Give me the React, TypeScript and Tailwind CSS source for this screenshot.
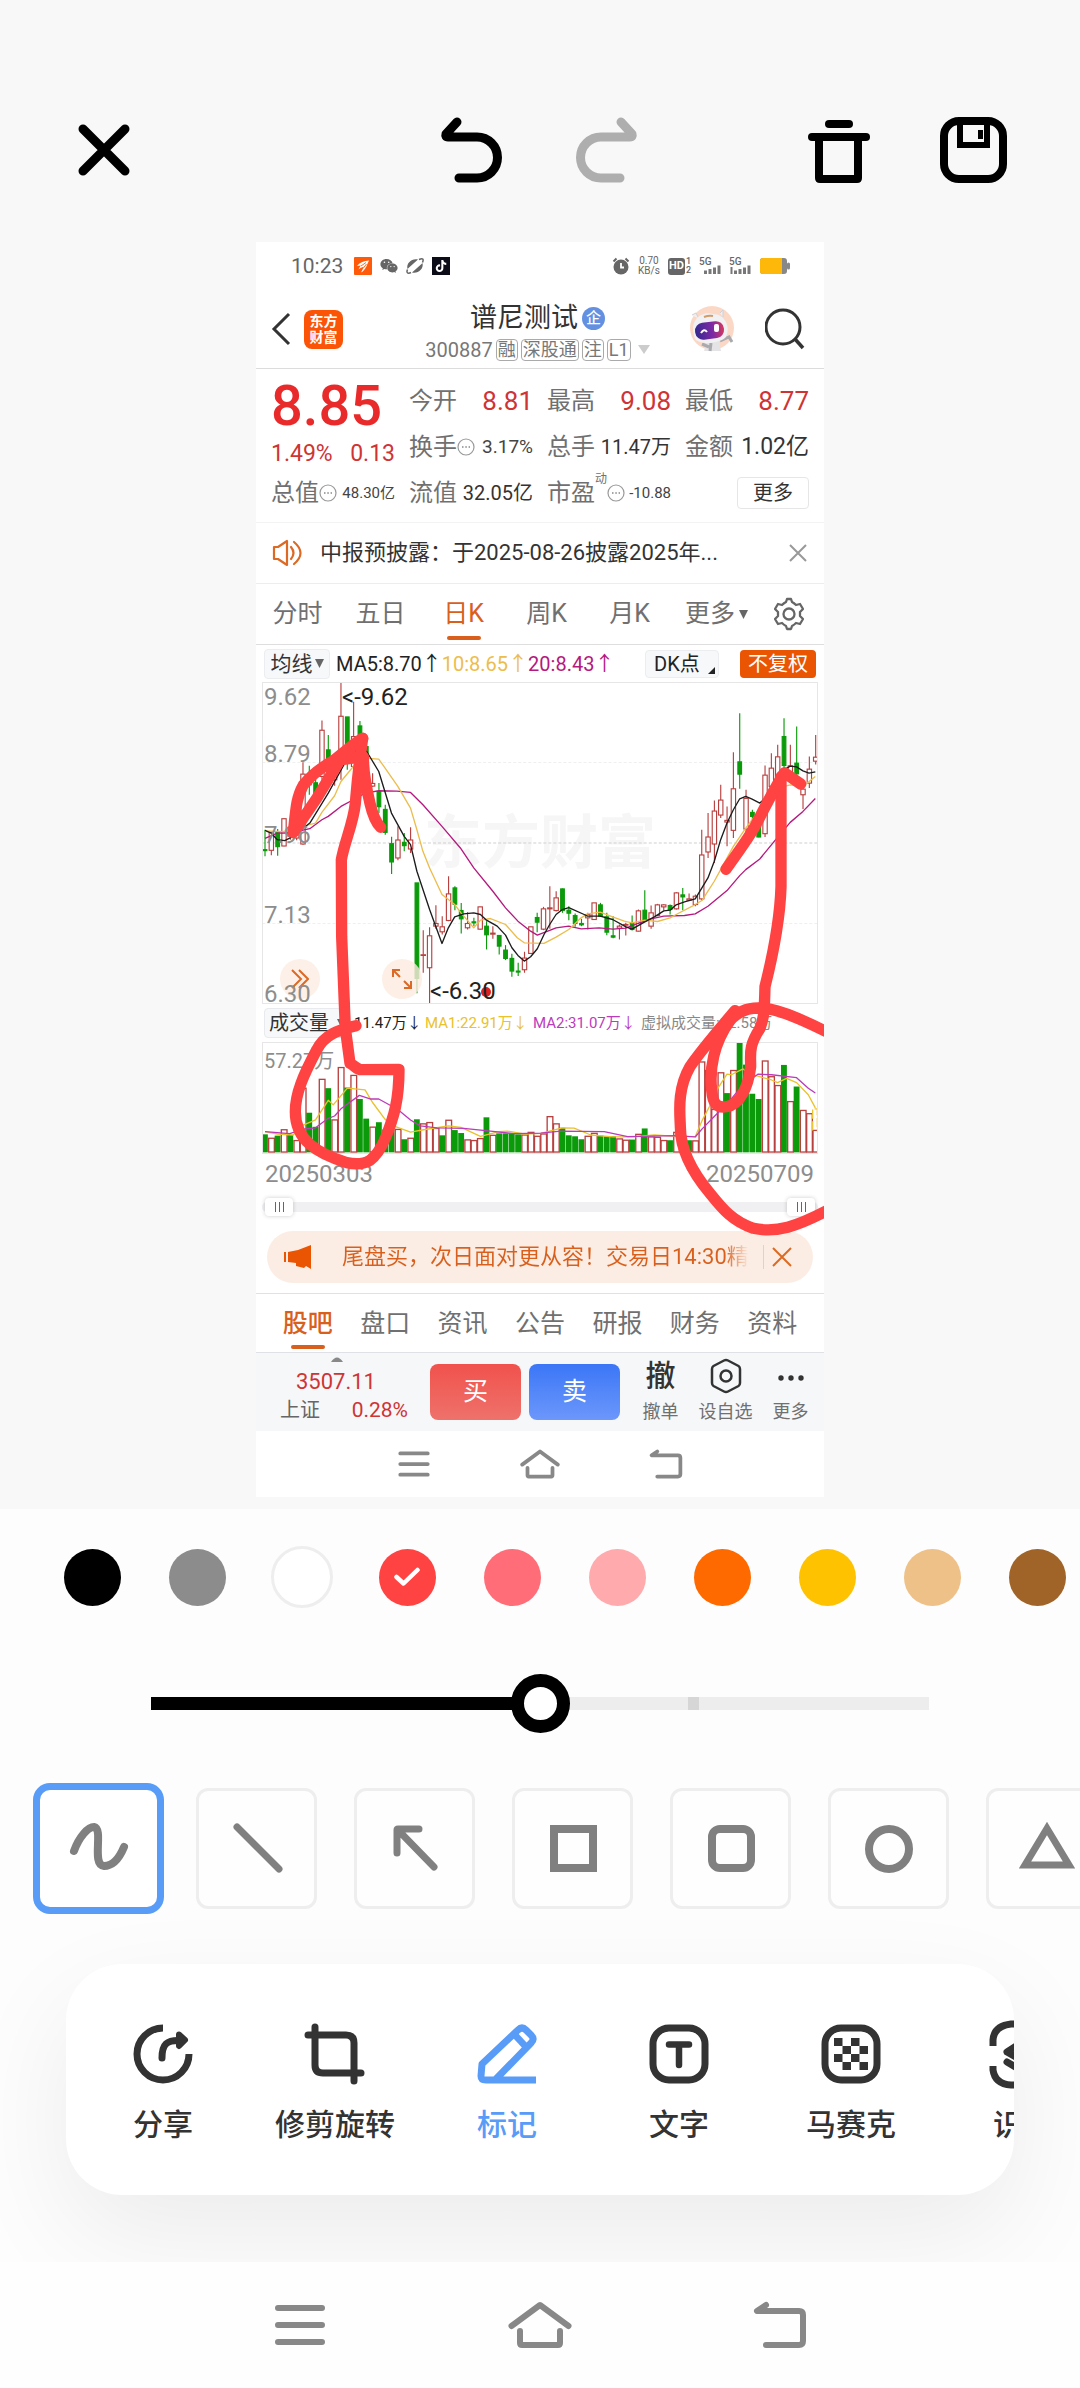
import React, { useState } from "react";
import { FaTiktok, FaWeixin } from "react-icons/fa6";

/* ---------- chart data ---------- */

// [rising, high, bodyTop, bodyBottom, low] in chart units
const CANDLES: [number, number, number, number, number][] = [
  [0, 480, 540, 543, 560], [1, 485, 488, 542, 557], [0, 478, 487, 531, 558], [1, 447, 447, 529, 530],
  [1, 470, 480, 500, 510], [1, 455, 470, 505, 512], [1, 277, 313, 523, 525], [0, 288, 315, 345, 375],
  [0, 320, 339, 380, 415], [1, 152, 181, 320, 330], [0, 195, 240, 300, 330], [1, 255, 270, 330, 348],
  [1, 37, 139, 270, 330], [0, 141, 141, 230, 300], [1, 95, 200, 290, 310], [0, 153, 168, 230, 260],
  [0, 215, 230, 300, 320], [1, 310, 341, 349, 352], [0, 340, 365, 411, 430], [0, 405, 419, 488, 495],
  [0, 501, 522, 577, 613], [1, 470, 511, 565, 572], [0, 490, 518, 528, 545], [1, 473, 511, 538, 550],
  [0, 640, 640, 927, 972], [1, 782, 856, 858, 910], [1, 773, 799, 895, 1002], [1, 707, 762, 770, 778],
  [1, 740, 772, 787, 795], [1, 620, 673, 753, 755], [0, 650, 655, 704, 722], [0, 700, 723, 748, 792],
  [1, 728, 762, 775, 780], [0, 745, 757, 760, 770], [1, 712, 712, 779, 780], [0, 755, 770, 796, 840],
  [1, 770, 791, 794, 808], [0, 797, 798, 830, 855], [0, 827, 842, 867, 872], [0, 853, 867, 905, 922],
  [0, 880, 905, 908, 920], [1, 847, 866, 901, 910], [1, 772, 772, 852, 853], [0, 730, 744, 758, 788],
  [1, 712, 718, 779, 782], [1, 650, 715, 718, 778], [1, 665, 685, 723, 726], [0, 657, 658, 723, 730],
  [0, 710, 722, 731, 752], [0, 732, 738, 762, 772], [0, 748, 762, 766, 770], [1, 730, 735, 745, 780],
  [1, 700, 700, 750, 751], [0, 700, 706, 740, 742], [0, 730, 742, 788, 797], [0, 740, 799, 803, 806],
  [1, 765, 770, 776, 810], [1, 760, 765, 767, 798], [0, 738, 762, 780, 783], [1, 720, 724, 785, 786],
  [0, 662, 722, 752, 756], [1, 708, 730, 770, 778], [1, 703, 706, 738, 740], [1, 704, 706, 712, 722],
  [0, 705, 708, 720, 735], [1, 668, 670, 718, 720], [0, 655, 676, 682, 722], [1, 672, 688, 692, 693],
  [1, 675, 680, 705, 710], [1, 480, 556, 688, 693], [1, 430, 502, 547, 565], [1, 392, 424, 523, 580],
  [1, 345, 391, 436, 445], [1, 410, 452, 457, 530], [1, 247, 357, 482, 505], [0, 130, 276, 313, 357],
  [1, 360, 386, 478, 500], [0, 420, 428, 440, 470], [0, 450, 470, 502, 503], [1, 287, 316, 492, 502],
  [1, 250, 295, 350, 380], [1, 225, 261, 320, 360], [0, 145, 200, 287, 300], [1, 225, 288, 310, 340],
  [0, 170, 280, 312, 330], [1, 330, 358, 375, 418], [1, 260, 298, 340, 355], [1, 195, 262, 274, 284],
];

// top edge of every volume bar; the base line is at 460
const VOLUMES = [
  408, 418, 412, 392, 410, 425, 265, 342, 385, 238, 267, 362, 202, 265, 226, 300, 360, 384, 371, 393, 395, 391,
  423, 418, 362, 374, 370, 388, 411, 363, 395, 404, 423, 425, 419, 356, 409, 405, 405, 405, 408, 408, 400, 412,
  405, 352, 374, 388, 411, 414, 423, 412, 403, 412, 414, 414, 420, 424, 424, 406, 390, 414, 415, 425, 426, 400,
  426, 426, 426, 185, 211, 330, 218, 282, 211, 128, 195, 284, 300, 182, 230, 257, 196, 306, 262, 333, 343, 394,
];
// days whose volume bar has another colour than their candle
const VOLUME_RED = [33, 36, 43];
const VOLUME_GREEN = [4, 28, 67, 73, 76];

const MA5 =
  "46,482 64,490 83,510 105,513 130,500 180,460 235,370 290,270 320,240 350,245 386,305 424,430 462,500 481,525 500,605 538,720 575,822 594,775 613,742 640,733 670,730 690,735 708,752 740,770 765,797 784,835 802,858 821,875 840,862 860,838 880,795 897,765 916,735 935,720 954,714 1000,735 1010,740 1048,740 1085,750 1125,772 1143,779 1180,758 1210,742 1238,724 1257,722 1275,706 1300,697 1332,688 1352,655 1370,625 1389,575 1408,510 1427,460 1446,420 1465,387 1483,380 1502,388 1525,400 1560,370 1597,300 1616,289 1635,291 1654,303 1672,310 1691,306";
const MA10 =
  "46,484 100,486 150,472 197,460 216,428 254,378 273,335 310,290 340,265 386,268 405,295 443,350 481,415 500,480 518,545 538,595 575,675 613,705 632,730 670,775 690,752 720,747 765,765 800,805 821,820 880,822 916,803 954,780 991,745 1010,733 1048,728 1085,742 1120,755 1143,760 1181,752 1219,756 1257,745 1275,735 1332,705 1352,693 1370,665 1389,635 1408,600 1446,530 1483,475 1502,450 1560,380 1597,350 1616,345 1654,350 1691,320";
const MA20 =
  "46,506 83,490 120,490 180,477 216,450 235,440 273,410 310,390 345,370 386,363 440,364 481,368 518,405 575,470 630,535 670,595 727,665 765,715 802,755 840,785 860,797 897,783 916,775 954,770 991,778 1045,775 1086,779 1124,776 1160,762 1200,748 1238,740 1300,738 1332,733 1370,710 1427,663 1465,618 1483,600 1525,568 1575,507 1616,458 1654,425 1691,386";
const VOL_MA1 =
  "46,398 83,405 130,408 160,378 197,362 235,302 250,316 292,265 345,270 367,308 405,360 424,378 481,399 520,392 594,380 632,385 690,412 745,398 770,396 820,405 870,403 935,386 970,387 1020,408 1086,414 1143,414 1210,408 1275,412 1332,413 1352,365 1375,320 1400,265 1427,222 1440,224 1475,206 1490,220 1560,240 1578,248 1605,235 1635,248 1670,285 1691,325";
const VOL_MA2 =
  "46,398 120,404 160,390 197,386 235,357 254,350 273,328 328,287 360,298 386,298 443,330 481,362 510,380 560,386 640,388 720,396 790,404 870,402 930,396 1060,398 1130,413 1270,410 1332,414 1352,390 1400,340 1430,310 1470,260 1520,222 1560,224 1635,233 1670,265 1691,280";

const RED = "#b8403f";
const GREEN = "#0a9a0a";
const dayX = (i: number) => 46 + i * 18.92;

function PriceChart() {
  return (
    <svg viewBox="40 39 1656 962" preserveAspectRatio="none" className="block h-full w-full" aria-hidden="true">
      <g stroke="#e3e3e3" strokeWidth="3" strokeDasharray="9 6">
        <path d="M38 278H1700M38 762H1700" stroke="#efefef" />
        <path d="M38 520H1700" stroke="#cfcfcf" />
      </g>
      {CANDLES.map(([up, hi, top, bottom, lo], i) => {
        const x = dayX(i);
        return up ? (
          <g key={i} stroke={RED} strokeWidth="3.4" fill="#fff">
            <path d={`M${x} ${hi}V${lo}`} />
            <rect x={x - 6.5} y={top} width="13" height={Math.max(bottom - top, 2)} />
          </g>
        ) : (
          <g key={i} stroke={GREEN} strokeWidth="3.4" fill={GREEN}>
            <path d={`M${x} ${hi}V${lo}`} />
            <rect x={x - 5.5} y={top} width="11" height={Math.max(bottom - top, 2)} />
          </g>
        );
      })}
      <g fill="none" strokeWidth="4" strokeLinejoin="round">
        <polyline points={MA20} stroke="#b5197f" />
        <polyline points={MA10} stroke="#ecbd4d" />
        <polyline points={MA5} stroke="#1c1c1c" />
      </g>
    </svg>
  );
}

function VolumeChart() {
  return (
    <svg viewBox="40 127 1656 336" preserveAspectRatio="none" className="block h-full w-full" aria-hidden="true">
      {VOLUMES.map((top, i) => {
        const x = dayX(i);
        const up = (CANDLES[i][0] === 1 || VOLUME_RED.includes(i)) && !VOLUME_GREEN.includes(i);
        return up ? (
          <rect key={i} x={x - 8} y={top} width="17" height={460 - top} fill="#fff" stroke={RED} strokeWidth="4" />
        ) : (
          <rect key={i} x={x - 9} y={top - 2} width="17.5" height={463 - top} fill={GREEN} />
        );
      })}
      <path d="M1683 394V328H1697V394" fill="none" stroke="#ecc534" strokeWidth="4" strokeDasharray="28 8" />
      <g fill="none" strokeWidth="4" strokeLinejoin="round">
        <polyline points={VOL_MA1} stroke="#e9c22c" />
        <polyline points={VOL_MA2} stroke="#bb3cbb" />
      </g>
    </svg>
  );
}

/* hand drawn annotation lying over the captured page */
function Markup() {
  return (
    <svg
      viewBox="18 -1284 1704 3765"
      className="pointer-events-none absolute inset-0 h-full w-full"
      fill="none"
      stroke="#ff4343"
      strokeWidth="34"
      strokeLinecap="round"
      strokeLinejoin="round"
      aria-hidden="true"
    >
      <path d="M318 1067C270 1080 225 1090 200 1140C160 1215 136 1270 136 1325C136 1410 200 1450 290 1478C350 1490 378 1472 408 1400C432 1340 447 1290 447 1198L335 1199C318 1199 312 1184 300 1180L286 1075L275 800L274 570C282 520 310 460 316 400C322 330 325 290 338 205" />
      <path d="M338 205C305 225 285 245 250 272C210 295 180 320 160 345C140 380 138 410 130 488L200 385L270 270L340 260C340 300 348 350 360 400C368 435 380 460 392 472" />
      <path d="M300 240L265 268" />
      <path d="M1428 598C1460 552 1500 500 1520 460C1550 400 1580 345 1603 308L1652 342" />
      <path d="M1593 320V650C1590 750 1565 870 1545 950C1543 1010 1544 1040 1530 1075C1495 1130 1502 1150 1502 1190C1495 1250 1470 1305 1430 1310C1400 1315 1388 1300 1385 1260C1378 1200 1390 1120 1440 1052C1500 980 1600 1020 1735 1088" />
      <path d="M1455 1022C1380 1110 1340 1160 1320 1190C1280 1260 1290 1330 1291 1370C1291 1440 1330 1510 1380 1570C1420 1620 1450 1655 1510 1675C1580 1690 1640 1670 1735 1620" />
    </svg>
  );
}

/* ---------- captured stock page ---------- */

function StatusBar() {
  return (
    <div className="flex h-12 items-center pr-[34px] pl-[35px] text-[#666]">
      <span className="w-[63px] text-[21px] leading-6">10:23</span>
      <svg viewBox="0 0 18 18" className="h-[18px] w-[18px]" aria-hidden="true">
        <rect width="18" height="18" rx="1" fill="#ff5a0a" />
        <path d="M3 9C6 5 10 4 15 3.5C13 7 12 13 7 15.5C9 12 9.500 10 9.500 9.500C8 10.500 6 11 4.500 12.500C5.500 10 6.500 9 7 8.500Z" fill="#fff" />
        <path d="M7 9L12 5.500M9 11.500L12.500 7" stroke="#ff5a0a" strokeWidth="0.900" />
      </svg>
      <FaWeixin className="ml-2 h-[18px] w-[18px]" aria-hidden="true" />
      <svg viewBox="0 0 18 18" className="ml-2 h-[18px] w-[18px]" aria-hidden="true">
        <path d="M1.500 12C0 6 6 1 12 2.500L2.500 11Z" fill="#666" />
        <path d="M16.500 6C18 12 12 17 6 15.500L15.500 7Z" fill="#666" />
        <path d="M1.500 12.500C0 16 2 17 5 15.500M13 2.500C17 1 18 2 16.500 5.500" fill="none" stroke="#666" strokeWidth="1.500" />
      </svg>
      <span className="ml-2 flex h-[18px] w-[18px] items-center justify-center bg-[#0c0c18] text-white">
        <FaTiktok className="h-3 w-3" aria-hidden="true" />
      </span>
      <div className="ml-auto flex items-center">
        <svg viewBox="0 0 18 18" className="h-[18px] w-[18px]" aria-hidden="true">
          <circle cx="9" cy="10" r="7.500" fill="#666" />
          <path d="M9 6V10.500H12" fill="none" stroke="#fff" strokeWidth="1.800" />
          <path d="M1.500 4.500L4.500 1.500M16.500 4.500L13.500 1.500" stroke="#666" strokeWidth="2" />
        </svg>
        <span className="mr-2 ml-2 flex flex-col items-center text-[10px] leading-[10px]">
          <span>0.70</span>
          <span>KB/s</span>
        </span>
        <span className="flex h-[17px] w-[17px] items-center justify-center rounded-[3px] bg-[#666] text-[11px] leading-3 font-bold text-white">
          HD
        </span>
        <span className="mr-2 flex flex-col pl-px text-[9px] leading-[9px] font-medium">
          <span>1</span>
          <span>2</span>
        </span>
        {[0, 1].map((k) => (
          <span key={k} className="relative mr-[6px] block h-[18px] w-6">
            <span className="absolute top-0 left-0 text-[10px] leading-[10px] font-medium">5G</span>
            <svg viewBox="0 0 24 18" className="h-[18px] w-6" aria-hidden="true">
              <path d="M6.500 17V13.500M11 17V12M15.500 17V10.500M20 17V8.500" stroke="#777" strokeWidth="3" />
              {k === 1 && <path d="M2.500 17V10" stroke="#777" strokeWidth="2" />}
            </svg>
          </span>
        ))}
        <svg viewBox="0 0 31 18" className="h-[18px] w-[31px]" aria-hidden="true">
          <rect x="1" y="1" width="27" height="16" rx="3" fill="#888" />
          <rect x="28" y="5.500" width="3" height="7" rx="1.500" fill="#888" />
          <path d="M4 1H23V17H4Q1 17 1 14V4Q1 1 4 1Z" fill="#fdb80a" />
        </svg>
      </div>
    </div>
  );
}

function StockHeader() {
  return (
    <header className="grid h-[79px] grid-cols-[1fr_auto_1fr] items-center border-b border-[#dcdcdc] pr-[19px] pl-[14px]">
      <div className="flex items-center gap-3">
        <button type="button" aria-label="返回">
          <svg viewBox="0 0 22 34" className="h-[34px] w-[22px]" aria-hidden="true">
            <path d="M19 2L4 17L19 32" fill="none" stroke="#333" strokeWidth="3" />
          </svg>
        </button>
        <span className="flex h-[39px] w-[39px] flex-col items-center justify-center rounded-lg bg-[#fb5407] text-[14px] leading-4 font-bold text-white">
          <span>东方</span>
          <span>财富</span>
        </span>
      </div>
      <div className="flex flex-col items-center pt-[10px]">
        <h1 className="flex items-center gap-1 text-[27px] leading-8 text-[#333]">
          谱尼测试
          <span className="flex h-[23px] w-[23px] items-center justify-center rounded-full bg-[#6390e0] text-[15px] leading-4 font-medium text-white">
            企
          </span>
        </h1>
        <div className="flex items-center gap-[3px] text-[20px] leading-8 text-[#777]">
          <span>300887</span>
          {["融", "深股通", "注", "L1"].map((t) => (
            <span key={t} className="rounded border border-[#aaa] px-px text-[18px] leading-5">
              {t}
            </span>
          ))}
          <svg viewBox="0 0 12 10" className="ml-1 h-[10px] w-3" aria-hidden="true">
            <path d="M0 0H12L6 9Z" fill="#ccc" />
          </svg>
        </div>
      </div>
      <div className="flex items-center justify-end gap-[30px]">
        <svg viewBox="0 0 48 48" className="h-12 w-12" aria-hidden="true">
          <circle cx="25" cy="23" r="22" fill="#fbd8c5" />
          <path d="M20 36L17 46H34L32 35Z" fill="#e4e4e6" />
          <path d="M15 39L22 42M24 38L23 46M33 36L42 32L45 37" stroke="#a9a9ae" strokeWidth="3" fill="none" />
          <path d="M5 10L9 8L12 14M33 8L36 5L36 12" fill="#efeff1" stroke="#cfcfd4" />
          <path d="M6 26C5 12 17 6 26 9C38 9 44 22 39 32C34 38 14 41 8 34Z" fill="#f1f0f2" />
          <path d="M17 12Q22 10 26 11" stroke="#d49a68" strokeWidth="2" fill="none" />
          <linearGradient id="visor" x1="0" x2="1" y1="0" y2="0">
            <stop offset="0" stopColor="#34288f" />
            <stop offset="0.600" stopColor="#7d2aa5" />
            <stop offset="1" stopColor="#d6385e" />
          </linearGradient>
          <rect x="8" y="17" width="29" height="17" rx="8" fill="url(#visor)" transform="rotate(-7 22 25)" />
          <path d="M14 28Q17 23 20 27" stroke="#fff" strokeWidth="2" fill="none" />
          <rect x="27" y="19" width="5" height="8" rx="2" fill="#fff" />
        </svg>
        <button type="button" aria-label="搜索">
          <svg viewBox="0 0 40 42" className="h-[42px] w-10" aria-hidden="true">
            <g fill="none" stroke="#333" strokeWidth="3">
              <circle cx="18" cy="19" r="17" />
              <path d="M30 31L38 40" strokeWidth="3.500" />
            </g>
          </svg>
        </button>
      </div>
    </header>
  );
}

function Dots() {
  return (
    <svg viewBox="0 0 18 18" className="h-[18px] w-[18px] shrink-0" aria-hidden="true">
      <circle cx="9" cy="9" r="8" fill="none" stroke="#999" strokeWidth="1.200" />
      <path d="M5 9H6.500M8.300 9H9.800M11.600 9H13" stroke="#888" strokeWidth="1.500" />
    </svg>
  );
}

const LABEL = "text-[24px] leading-8 text-[#707070]";

function Stat({ label, value, size, dots, sup }: { label: string; value: string; size: string; dots?: boolean; sup?: string }) {
  return (
    <div className="flex items-center justify-between whitespace-nowrap">
      <dt className={`flex items-center ${LABEL}`}>
        {label}
        {sup && <sup className="top-[-14px] text-[12px] leading-3">{sup}</sup>}
        {dots && <Dots />}
      </dt>
      <dd className={size}>{value}</dd>
    </div>
  );
}

const S_RED = "text-[26px] leading-8 text-[#cf3434]";
const S_SM = "text-[15px] leading-8 text-[#444]";
const S_MD = "text-[20px] leading-8 text-[#333]";

function Quote() {
  return (
    <section className="border-b border-[#f3f3f3] px-[15px] pt-[9px] pb-[6px]">
      <dl className="grid grid-cols-4 grid-rows-[46px_46px_46px] gap-x-[14px]">
        <div className="row-span-2 flex flex-col justify-between text-[#e92a2a]">
          <dd className="text-[56px] leading-[56px] font-medium">8.85</dd>
          <dd className="flex justify-between text-[23px] leading-8 text-[#cf3434]">
            <span>1.49%</span>
            <span>0.13</span>
          </dd>
        </div>
        <Stat label="今开" value="8.81" size={S_RED} />
        <Stat label="最高" value="9.08" size={S_RED} />
        <Stat label="最低" value="8.77" size={S_RED} />
        <Stat label="换手" value="3.17%" size="text-[19px] leading-8 text-[#444]" dots />
        <Stat label="总手" value="11.47万" size={S_MD} />
        <Stat label="金额" value="1.02亿" size="text-[23px] leading-8 text-[#333]" />
        <Stat label="总值" value="48.30亿" size={S_SM} dots />
        <Stat label="流值" value="32.05亿" size={S_MD} />
        <Stat label="市盈" value="-10.88" size={S_SM} dots sup="动" />
        <div className="flex items-center justify-end">
          <button type="button" className="h-8 w-[72px] rounded border border-[#e6e6e6] text-[20px] leading-7 text-[#333]">
            更多
          </button>
        </div>
      </dl>
    </section>
  );
}

function Notice() {
  return (
    <div className="flex h-[61px] items-center border-b border-[#ededed] pr-4 pl-4">
      <svg viewBox="0 0 32 30" className="h-[30px] w-8" aria-hidden="true">
        <g fill="none" stroke="#dc6a25" strokeWidth="2.200" strokeLinejoin="round" strokeLinecap="round">
          <path d="M2 9H6L15 3V27L6 21H2Z" />
          <path d="M19 9Q24 15 19 21M22 4Q35 15 22 26" />
        </g>
      </svg>
      <p className="ml-4 text-[22px] leading-8 whitespace-nowrap text-[#333]">中报预披露：于2025-08-26披露2025年...</p>
      <button type="button" aria-label="关闭公告" className="ml-auto">
        <svg viewBox="0 0 20 20" className="h-5 w-5" aria-hidden="true">
          <path d="M2 2L18 18M18 2L2 18" stroke="#999" strokeWidth="2" />
        </svg>
      </button>
    </div>
  );
}

function PeriodTabs() {
  return (
    <nav className="flex h-[61px] items-center border-b border-[#dedede] pr-5 text-[25px] leading-9 text-[#707070]">
      {["分时", "五日", "日K", "周K", "月K"].map((t) => (
        <button key={t} type="button" className={t === "日K" ? "relative w-[83px] text-[#d9601c]" : "w-[83px]"}>
          {t}
          {t === "日K" && <span className="absolute bottom-[-8px] left-1/2 h-1 w-[34px] -translate-x-1/2 rounded-full bg-[#d9601c]" />}
        </button>
      ))}
      <button type="button" className="flex items-center gap-1 pl-[14px]">
        更多
        <svg viewBox="0 0 9 9" className="h-[9px] w-[9px]" aria-hidden="true">
          <path d="M0 0H9L4.500 9Z" fill="#666" />
        </svg>
      </button>
      <button type="button" aria-label="设置" className="ml-auto">
        <svg viewBox="0 0 30 34" className="h-[34px] w-[30px]" aria-hidden="true">
          <g fill="none" stroke="#666" strokeWidth="2.300" strokeLinejoin="round">
            <path d="M12 5L13 2H17L18 5Q20 6 22 8L26 7L29 12L26 15V19L29 22L26 27L22 26Q20 28 18 29L17 32H13L12 29Q10 28 8 26L4 27L1 22L4 19V15L1 12L4 7L8 8Q10 6 12 5Z" />
            <circle cx="15" cy="17" r="5.500" />
          </g>
        </svg>
      </button>
    </nav>
  );
}

function Averages() {
  return (
    <div className="flex h-[37px] items-center px-2 text-[20px] leading-7 whitespace-nowrap">
      <button type="button" className="flex h-[30px] w-[66px] items-center justify-center gap-[2px] rounded border border-[#ebedf0] bg-[#f7f8fa] text-[21px] text-[#333]">
        均线
        <svg viewBox="0 0 9 9" className="h-[9px] w-[9px]" aria-hidden="true">
          <path d="M0 0H9L4.500 9Z" fill="#666" />
        </svg>
      </button>
      <span className="ml-[6px] text-[#222]">MA5:8.70↑</span>
      <span className="text-[#ecbd4d]">10:8.65↑</span>
      <span className="text-[#b5197f]">20:8.43↑</span>
      <button type="button" className="mr-[21px] ml-auto flex h-7 w-[74px] items-end rounded border border-[#ebedf0] bg-[#f7f8fa] pl-2 leading-[26px] text-[#222]">
        DK点
        <svg viewBox="0 0 7 7" className="mb-[3px] ml-2 h-[7px] w-[7px]" aria-hidden="true">
          <path d="M7 0V7H0Z" fill="#222" />
        </svg>
      </button>
      <button type="button" className="h-7 w-[76px] rounded bg-[#ea5504] text-white">
        不复权
      </button>
    </div>
  );
}

const AXIS = "absolute left-px text-[24px] leading-7 text-[#8d8d8d]";

function Charts() {
  return (
    <section>
      <div className="relative mx-[6px] h-[322px] border border-[#e6e6e6]">
        <span className="absolute inset-x-0 top-[124px] text-center text-[58px] leading-[72px] font-bold whitespace-nowrap text-[#f6f6f6]">
          东方财富
        </span>
        <div className="absolute inset-0">
          <PriceChart />
        </div>
        <span className={`${AXIS} top-0`}>9.62</span>
        <span className={`${AXIS} top-[57px]`}>8.79</span>
        <span className={`${AXIS} top-[138px]`}>7.96</span>
        <span className={`${AXIS} top-[218px]`}>7.13</span>
        <span className="absolute top-[276px] left-[17px] flex h-10 w-10 items-center justify-center rounded-full bg-[#fdf0e8]">
          <svg viewBox="0 0 18 20" className="h-5 w-[18px]" aria-hidden="true">
            <path d="M1 1L10 10L1 19M8 1L17 10L8 19" fill="none" stroke="#dc6a25" strokeWidth="2" />
          </svg>
        </span>
        <span className={`${AXIS} top-[297px]`}>6.30</span>
        <span className="absolute top-[276px] left-[119px] flex h-10 w-10 items-center justify-center rounded-full bg-[#fdebe0]/80">
          <svg viewBox="0 0 20 20" className="h-5 w-5" aria-hidden="true">
            <path d="M1 8V1H8M1 1L8 8M19 12V19H12M19 19L12 12" fill="none" stroke="#dc6a25" strokeWidth="2" />
          </svg>
        </span>
        <span className="absolute top-0 left-[79px] text-[24px] leading-7 text-[#222]">&lt;-9.62</span>
        <span className="absolute top-[304px] left-[218px] h-[10px] w-[10px] rounded-full bg-[#e02020]" />
        <span className="absolute top-[294px] left-[167px] text-[24px] leading-7 text-[#222]">&lt;-6.30</span>
      </div>
      <div className="flex h-[38px] items-center px-2 text-[15px] leading-7 whitespace-nowrap">
        <button type="button" className="flex h-[30px] w-[84px] items-center gap-2 rounded border border-[#e8eaed] bg-[#f7f8fa] pl-1 text-[20px] text-[#333]">
          成交量
          <svg viewBox="0 0 8 8" className="h-2 w-2" aria-hidden="true">
            <path d="M0 0H8L4 8Z" fill="#666" />
          </svg>
        </button>
        <span className="ml-[6px] w-[71px] text-[#222]">11.47万↓</span>
        <span className="w-[108px] text-[#e9c22c]">MA1:22.91万↓</span>
        <span className="w-[108px] text-[#bb3cbb]">MA2:31.07万↓</span>
        <span className="text-[#888]">虚拟成交量:12.58万</span>
      </div>
      <div className="relative mx-[6px] h-28 border border-[#e6e6e6]">
        <span className="absolute top-1 left-px text-[20px] leading-7 text-[#8d8d8d]">57.27万</span>
        <div className="absolute inset-0">
          <VolumeChart />
        </div>
      </div>
      <div className="flex h-9 items-end justify-between pr-[10px] pl-[9px] text-[24px] leading-8 text-[#8d8d8d]">
        <span>20250303</span>
        <span>20250709</span>
      </div>
      <div className="flex h-[34px] items-center px-[6px]">
        <div className="flex h-[10px] flex-1 items-center justify-between rounded-full bg-[#f0f0f3] px-[3px]">
          {["start", "end"].map((k) => (
            <button
              key={k}
              type="button"
              aria-label={k === "start" ? "起始日期" : "结束日期"}
              className="flex h-[18px] w-7 items-center justify-center gap-[3px] rounded bg-white shadow-[0_0_4px_rgba(0,0,0,0.2)]"
            >
              <span className="h-[10px] w-px bg-[#666]" />
              <span className="h-[10px] w-px bg-[#666]" />
              <span className="h-[10px] w-px bg-[#666]" />
            </button>
          ))}
        </div>
      </div>
    </section>
  );
}

function Promo() {
  return (
    <div className="mx-[11px] mt-[7px] mb-[10px] flex h-[52px] items-center rounded-full bg-[#fcede4] pr-[21px] pl-[17px] text-[#d9601c]">
      <svg viewBox="0 0 28 26" className="h-[26px] w-7" aria-hidden="true">
        <path d="M1 8V18" stroke="#ea5504" strokeWidth="2" />
        <path d="M4 8L14 6L27 1V25L22 22L20 24L12 22V19L4 18Z" fill="#ea5504" />
      </svg>
      <p className="ml-[30px] bg-[linear-gradient(to_right,#d9601c_94%,#fcede4)] bg-clip-text text-[22px] leading-8 whitespace-nowrap text-transparent">
        尾盘买，次日面对更从容！交易日14:30精
      </p>
      <span className="ml-auto h-6 w-px bg-[#f0cdb8]" />
      <button type="button" aria-label="关闭推广" className="ml-2">
        <svg viewBox="0 0 20 20" className="h-5 w-5" aria-hidden="true">
          <path d="M1 1L19 19M19 1L1 19" stroke="#dc6a25" strokeWidth="2" />
        </svg>
      </button>
    </div>
  );
}

function InfoTabs() {
  return (
    <nav className="flex h-[60px] border-y border-[#dfe1e6] px-[13px] text-[25px] leading-9 text-[#707070]">
      {["股吧", "盘口", "资讯", "公告", "研报", "财务", "资料"].map((t) => (
        <button
          key={t}
          type="button"
          className={t === "股吧" ? "relative flex-1 pt-[2px] font-medium text-[#d9601c]" : "flex-1 pt-[2px]"}
        >
          {t}
          {t === "股吧" && <span className="absolute bottom-[3px] left-1/2 h-1 w-[34px] -translate-x-1/2 rounded-full bg-[#d9601c]" />}
        </button>
      ))}
    </nav>
  );
}

function TradeBar() {
  const side = "flex w-[65px] flex-col items-center justify-center gap-1 text-[18px] leading-7 text-[#707070]";
  return (
    <div className="flex h-[78px] items-center bg-[#f6f7f9] pl-6 whitespace-nowrap">
      <div className="relative mr-[22px] flex h-full w-32 flex-col justify-center pt-2 text-[20px] leading-7">
        <svg viewBox="0 0 12 5" className="absolute top-1 left-[51px] h-[5px] w-3" aria-hidden="true">
          <path d="M0 5Q6 -4 12 5Z" fill="#888" />
        </svg>
        <span className="pl-4 text-[22px] text-[#cf3434]">3507.11</span>
        <span className="flex justify-between">
          <span className="text-[#666]">上证</span>
          <span className="text-[21px] text-[#cf3434]">0.28%</span>
        </span>
      </div>
      <button type="button" className="mr-2 h-14 w-[91px] rounded-lg bg-linear-to-b from-[#f1514c] to-[#ee716b] text-[25px] leading-9 text-white">
        买
      </button>
      <button type="button" className="mr-2 h-14 w-[91px] rounded-lg bg-linear-to-b from-[#3b76f6] to-[#6c97fb] text-[25px] leading-9 text-white">
        卖
      </button>
      <button type="button" className={side}>
        <span className="text-[30px] leading-9 font-medium text-[#333]">撤</span>
        <span>撤单</span>
      </button>
      <button type="button" className={side}>
        <svg viewBox="0 0 32 36" className="h-9 w-8" aria-hidden="true">
          <g fill="none" stroke="#333" strokeWidth="2.500" strokeLinejoin="round">
            <path d="M14 2.500Q16 1.500 18 2.500L28.500 8Q30 9 30 11V25Q30 27 28.500 28L18 33.500Q16 34.500 14 33.500L3.500 28Q2 27 2 25V11Q2 9 3.500 8Z" />
            <circle cx="16" cy="18" r="5.500" />
          </g>
        </svg>
        <span>设自选</span>
      </button>
      <button type="button" className={side}>
        <svg viewBox="0 0 28 36" className="h-9 w-7" aria-hidden="true">
          <g fill="#333">
            <circle cx="4" cy="20" r="2.700" />
            <circle cx="14" cy="20" r="2.700" />
            <circle cx="24" cy="20" r="2.700" />
          </g>
        </svg>
        <span>更多</span>
      </button>
    </div>
  );
}

function NavIcons({ box }: { box: string }) {
  return (
    <>
      <button type="button" aria-label="最近任务">
        <svg viewBox="0 0 64 48" className={box} aria-hidden="true">
          <path d="M10 7H54M10 24H54M10 41H54" stroke="#888" strokeWidth="6" strokeLinecap="round" />
        </svg>
      </button>
      <button type="button" aria-label="主屏幕">
        <svg viewBox="0 0 64 48" className={box} aria-hidden="true">
          <path d="M3.500 25L32 4L60.500 25M12 30V42Q12 44 14 44H50Q52 44 52 42V30" fill="none" stroke="#888" strokeWidth="6" strokeLinecap="round" strokeLinejoin="round" />
        </svg>
      </button>
      <button type="button" aria-label="返回上一级">
        <svg viewBox="0 0 64 48" className={box} aria-hidden="true">
          <path d="M18 4L9 10H51Q55 10 55 14V40Q55 44 51 44H18" fill="none" stroke="#888" strokeWidth="6" strokeLinecap="round" strokeLinejoin="round" />
        </svg>
      </button>
    </>
  );
}

function CapturedPage() {
  return (
    <article className="relative mx-auto w-[568px] overflow-hidden bg-white">
      <StatusBar />
      <StockHeader />
      <Quote />
      <Notice />
      <PeriodTabs />
      <Averages />
      <Charts />
      <Promo />
      <InfoTabs />
      <TradeBar />
      <div className="flex h-[66px] items-center justify-center gap-[86px]">
        <NavIcons box="h-[30px] w-10" />
      </div>
      <Markup />
    </article>
  );
}

/* ---------- editor ---------- */

function Toolbar() {
  return (
    <header className="grid h-[242px] grid-cols-[1fr_auto_1fr] items-center pt-[58px] pr-[70px] pl-[68px]">
      <button type="button" aria-label="关闭" className="w-[72px]">
        <svg viewBox="0 0 72 72" className="h-[72px] w-[72px]" aria-hidden="true">
          <path d="M15 15L57 57M57 15L15 57" stroke="#000" strokeWidth="9" strokeLinecap="round" />
        </svg>
      </button>
      <div className="flex gap-[63px]">
        <button type="button" aria-label="撤销">
          <svg viewBox="0 0 72 72" className="h-[72px] w-[72px]" aria-hidden="true">
            <path d="M21 8L10 20Q9 23 12 23H41A20 20 0 0 1 41 64H23" fill="none" stroke="#000" strokeWidth="9" strokeLinecap="round" strokeLinejoin="round" />
          </svg>
        </button>
        <button type="button" aria-label="重做">
          <svg viewBox="0 0 72 72" className="h-[72px] w-[72px]" aria-hidden="true">
            <path d="M50 8L61 20Q62 23 59 23H30A20 20 0 0 0 30 64H49" fill="none" stroke="#aeaeae" strokeWidth="9" strokeLinecap="round" strokeLinejoin="round" />
          </svg>
        </button>
      </div>
      <div className="flex justify-end gap-[63px]">
        <button type="button" aria-label="删除">
          <svg viewBox="0 0 72 72" className="h-[72px] w-[72px]" aria-hidden="true">
            <path d="M26 10H46" stroke="#000" strokeWidth="8" strokeLinecap="round" />
            <path d="M9 23H63" stroke="#000" strokeWidth="8" strokeLinecap="round" />
            <path d="M16 24V64Q16 65 17 65H54Q55 65 55 64V24" fill="none" stroke="#000" strokeWidth="8" strokeLinejoin="round" />
          </svg>
        </button>
        <button type="button" aria-label="保存">
          <svg viewBox="0 0 72 72" className="h-[72px] w-[72px]" aria-hidden="true">
            <rect x="6" y="7" width="59" height="58" rx="15" fill="none" stroke="#000" strokeWidth="8" />
            <path d="M22 9V31H49V9" fill="none" stroke="#000" strokeWidth="6" />
            <path d="M42.500 16V25" stroke="#000" strokeWidth="5" />
          </svg>
        </button>
      </div>
    </header>
  );
}

const COLORS = [
  { name: "黑色", cls: "bg-black" },
  { name: "灰色", cls: "bg-[#8c8c8c]" },
  { name: "白色", cls: "bg-white" },
  { name: "红色", cls: "bg-[#ff4343]" },
  { name: "玫红", cls: "bg-[#ff6e78]" },
  { name: "粉色", cls: "bg-[#ffaaac]" },
  { name: "橙色", cls: "bg-[#ff6a00]" },
  { name: "黄色", cls: "bg-[#ffc200]" },
  { name: "沙色", cls: "bg-[#eec188]" },
  { name: "棕色", cls: "bg-[#a06428]" },
];

function Palette() {
  return (
    <div className="flex gap-[43px] overflow-hidden pl-[61px]">
      {COLORS.map((c) => (
        <button
          key={c.name}
          type="button"
          aria-label={c.name}
          className={
            c.name === "白色"
              ? "h-[62px] w-[62px] shrink-0 rounded-full border-[3px] border-[#eee] bg-white"
              : "flex h-[62px] w-[62px] shrink-0 items-center justify-center"
          }
        >
          {c.name !== "白色" && (
            <span className={`flex h-[57px] w-[57px] items-center justify-center rounded-full ${c.cls}`}>
              {c.name === "红色" && (
                <svg viewBox="0 0 28 20" className="h-5 w-7" aria-hidden="true">
                  <path d="M3.500 10L10.500 16.500L24.500 3" fill="none" stroke="#fff" strokeWidth="4.500" strokeLinecap="round" strokeLinejoin="round" />
                </svg>
              )}
            </span>
          )}
        </button>
      ))}
    </div>
  );
}

function StrokeSlider() {
  const [value, setValue] = useState(50);
  return (
    <div className="mt-[66px] px-[151px]">
      <input
        type="range"
        aria-label="画笔粗细"
        value={value}
        onChange={(e) => setValue(Number(e.target.value))}
        className="block h-[59px] w-full appearance-none bg-[linear-gradient(to_right,#000_50%,#ededed_50%,#ededed_69%,#d6d6d6_69%,#d6d6d6_70.5%,#ededed_70.5%)] bg-[length:100%_13px] bg-center bg-no-repeat [&::-webkit-slider-thumb]:h-[59px] [&::-webkit-slider-thumb]:w-[59px] [&::-webkit-slider-thumb]:appearance-none [&::-webkit-slider-thumb]:rounded-full [&::-webkit-slider-thumb]:border-[13px] [&::-webkit-slider-thumb]:border-solid [&::-webkit-slider-thumb]:border-black [&::-webkit-slider-thumb]:bg-white"
      />
    </div>
  );
}

const SHAPES: { name: string; icon: React.ReactNode }[] = [
  { name: "曲线", icon: <path d="M7 34C12 20 21 10 27 10C37 12 24 48 37 49C46 49 52 42 57 30" /> },
  { name: "直线", icon: <path d="M12 10L54 52" strokeWidth="7" /> },
  { name: "箭头", icon: <path d="M36 12H15Q14 12 14 13V36M15 13L51 50" strokeWidth="7" /> },
  { name: "矩形", icon: <rect x="13" y="12" width="39" height="39" strokeLinejoin="miter" /> },
  { name: "圆角矩形", icon: <rect x="13" y="12" width="39" height="39" rx="8" /> },
  { name: "圆形", icon: <circle cx="32" cy="32" r="20" /> },
  { name: "三角形", icon: <path d="M32 11.500L54 48H10Z" strokeWidth="7" strokeLinejoin="miter" /> },
];

function ShapePicker() {
  return (
    <div className="mt-[47px] flex gap-[37px] overflow-hidden py-2 pl-[38px]">
      {SHAPES.map((s, i) => (
        <button
          key={s.name}
          type="button"
          aria-label={s.name}
          aria-pressed={i === 0}
          className={
            i === 0
              ? "flex h-[121px] w-[121px] shrink-0 items-center justify-center rounded-xl border-2 border-[#589cf8] bg-white ring-5 ring-[#589cf8]"
              : "flex h-[121px] w-[121px] shrink-0 items-center justify-center rounded-xl border-[3px] border-[#eee] bg-[#fefefe]"
          }
        >
          <svg viewBox="0 0 64 64" className="h-16 w-16" fill="none" stroke="#808080" strokeWidth="8" strokeLinecap="round" strokeLinejoin="round" aria-hidden="true">
            {s.icon}
          </svg>
        </button>
      ))}
    </div>
  );
}

const ACTIONS: { name: string; icon: React.ReactNode }[] = [
  {
    name: "分享",
    icon: (
      <>
        <path d="M32 6A26 26 0 1 0 58 32" strokeLinecap="butt" />
        <path d="M31 36C31 22 36 18 49 18.500" />
        <path d="M48 12.500L54 18L48 24Z" fill="#333" strokeWidth="6" />
      </>
    ),
  },
  {
    name: "修剪旋转",
    icon: <path d="M12 5V43Q12 51 20 51H58M5 13H43Q51 13 51 21V59" />,
  },
  {
    name: "标记",
    icon: (
      <>
        <path d="M61 58H11Q6 58 6 54L7 42L43 8Q47 4 51 8L56 13Q60 17 56 21L21 57" strokeLinecap="butt" />
        <path d="M40 13L52 26" strokeLinecap="butt" />
      </>
    ),
  },
  {
    name: "文字",
    icon: (
      <>
        <rect x="6" y="6" width="52" height="52" rx="16" />
        <path d="M22 22.500H42M32 23V43" strokeWidth="6.500" />
      </>
    ),
  },
  {
    name: "马赛克",
    icon: (
      <>
        <rect x="6" y="6" width="52" height="52" rx="16" />
        <path
          d="M15 16h8.500v8h-8.500zM32 16h8.500v8h-8.500zM23.500 24h8.500v8h-8.500zM40.500 24h8.500v8h-8.500zM15 32h8.500v8h-8.500zM32 32h8.500v8h-8.500zM23.500 40h8.500v8h-8.500zM40.500 40h8.500v8h-8.500z"
          fill="#333"
          stroke="none"
        />
      </>
    ),
  },
  {
    name: "识图",
    icon: (
      <>
        <path d="M2 24V18Q3 4 20 2H24M2 44V48Q4 62 20 63H24" strokeLinecap="butt" />
        <path d="M30 21L16 30L30 38M16 40L26 46" />
      </>
    ),
  },
];

function ActionCard() {
  return (
    <nav className="mx-[66px] mt-[47px] flex h-[231px] overflow-hidden rounded-[56px] bg-white pl-[11px] shadow-[0_40px_110px_rgba(0,0,0,0.07)]">
      {ACTIONS.map((a) => (
        <button
          key={a.name}
          type="button"
          className={
            a.name === "标记"
              ? "flex w-[172px] shrink-0 flex-col items-center gap-[17px] pt-[58px] text-[#589cf8]"
              : "flex w-[172px] shrink-0 flex-col items-center gap-[17px] pt-[58px] text-[#333]"
          }
        >
          <svg viewBox="0 0 64 64" className="h-16 w-16 overflow-visible" fill="none" stroke="currentColor" strokeWidth="7" strokeLinecap="round" strokeLinejoin="round" aria-hidden="true">
            {a.icon}
          </svg>
          <span className="text-[30px] leading-[44px] font-medium">{a.name}</span>
        </button>
      ))}
    </nav>
  );
}

export default function App() {
  return (
    <div className="flex min-h-screen flex-col bg-white font-['Roboto','Noto_Sans_CJK_SC',sans-serif]">
      <main className="bg-[#f8f8f8] pb-3">
        <Toolbar />
        <CapturedPage />
      </main>
      <section className="overflow-hidden bg-[#fdfdfd] pt-[37px] pb-[67px]">
        <Palette />
        <StrokeSlider />
        <ShapePicker />
        <ActionCard />
      </section>
      <footer className="flex h-[126px] items-center justify-center gap-[176px] bg-[#fefefe]">
        <NavIcons box="h-12 w-16" />
      </footer>
    </div>
  );
}
